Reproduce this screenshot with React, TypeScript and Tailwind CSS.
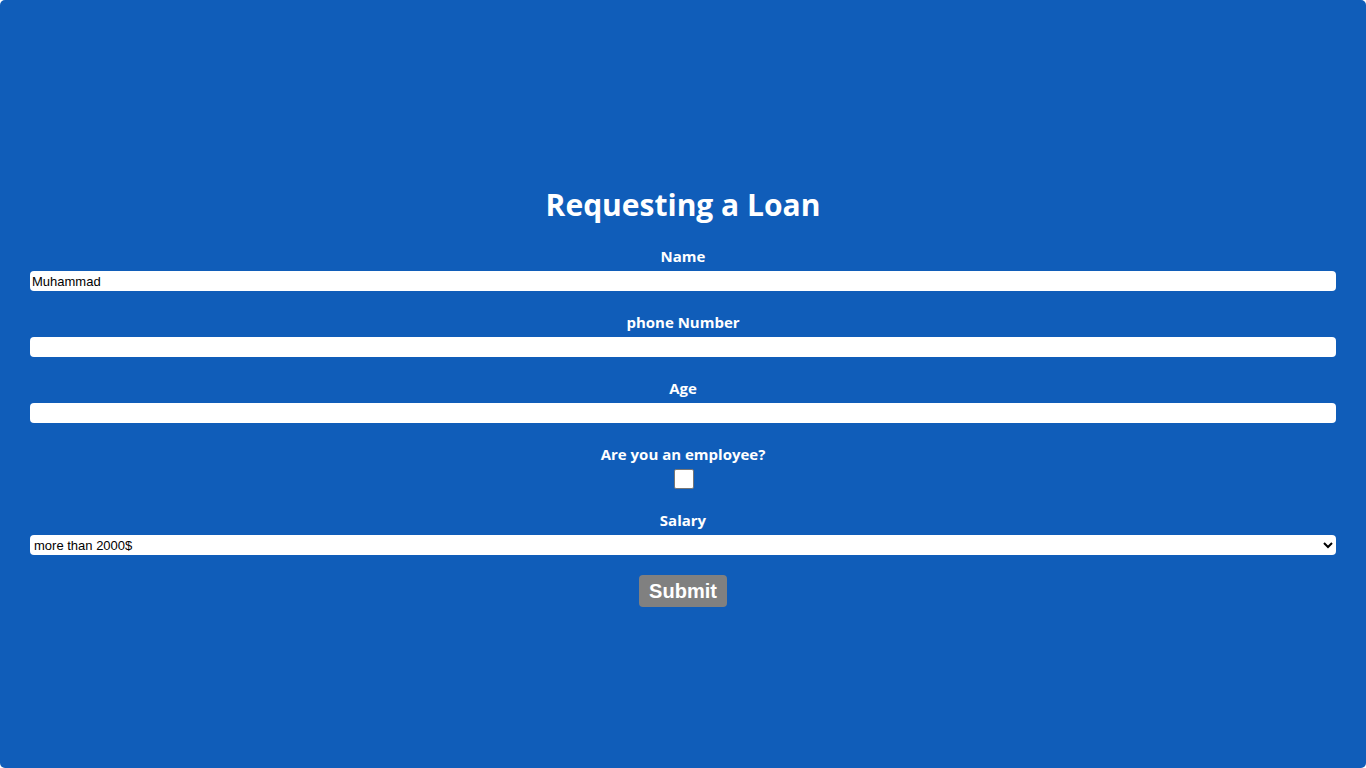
import { useState } from 'react';

const labelCls =
  "block text-center text-[15px] leading-5 font-bold text-white [font-family:'Open_Sans',sans-serif]";
const inputCls =
  "block h-5 w-full rounded-[4px] bg-white px-[2px] text-[13px] text-black outline-none [font-family:'Liberation_Sans',Arial,sans-serif]";

export default function App() {
  const [name, setName] = useState('Muhammad');
  const [phone, setPhone] = useState('');
  const [age, setAge] = useState('');
  const [employee, setEmployee] = useState(false);
  const [salary, setSalary] = useState('more');

  return (
    <div className="h-[768px] w-full overflow-hidden rounded-[5px] bg-[#105db9] px-[30px] pt-[185px]">
      <form className="flex flex-col" onSubmit={(e) => e.preventDefault()}>
        <h1 className="text-center text-[30px] leading-10 font-bold text-white [font-family:'Open_Sans',sans-serif]">
          Requesting a Loan
        </h1>

        <div className="mt-[21px] flex flex-col gap-[5px]">
          <label className={labelCls}>Name</label>
          <input className={inputCls} value={name} onChange={(e) => setName(e.target.value)} />
        </div>

        <div className="mt-[21px] flex flex-col gap-[5px]">
          <label className={labelCls}>phone Number</label>
          <input className={inputCls} value={phone} onChange={(e) => setPhone(e.target.value)} />
        </div>

        <div className="mt-[21px] flex flex-col gap-[5px]">
          <label className={labelCls}>Age</label>
          <input className={inputCls} value={age} onChange={(e) => setAge(e.target.value)} />
        </div>

        <div className="mt-[21px] flex flex-col items-center gap-[5px]">
          <label className={labelCls}>Are you an employee?</label>
          <input
            type="checkbox"
            checked={employee}
            onChange={(e) => setEmployee(e.target.checked)}
            className="ml-[2px] h-5 w-5 appearance-none rounded-[2px] border border-[#767676] bg-white"
          />
        </div>

        <div className="mt-[21px] flex flex-col gap-[5px]">
          <label className={labelCls}>Salary</label>
          <select className={inputCls + ' pl-0'} value={salary} onChange={(e) => setSalary(e.target.value)}>
            <option value="more">more than 2000$</option>
            <option value="less">less than 2000$</option>
          </select>
        </div>

        <div className="mt-5 flex justify-center">
          <button
            type="submit"
            className="h-8 w-[88px] rounded-[4px] bg-[#808080] text-[20px] font-bold text-white [font-family:'Liberation_Sans',Arial,sans-serif]"
          >
            Submit
          </button>
        </div>
      </form>
    </div>
  );
}
